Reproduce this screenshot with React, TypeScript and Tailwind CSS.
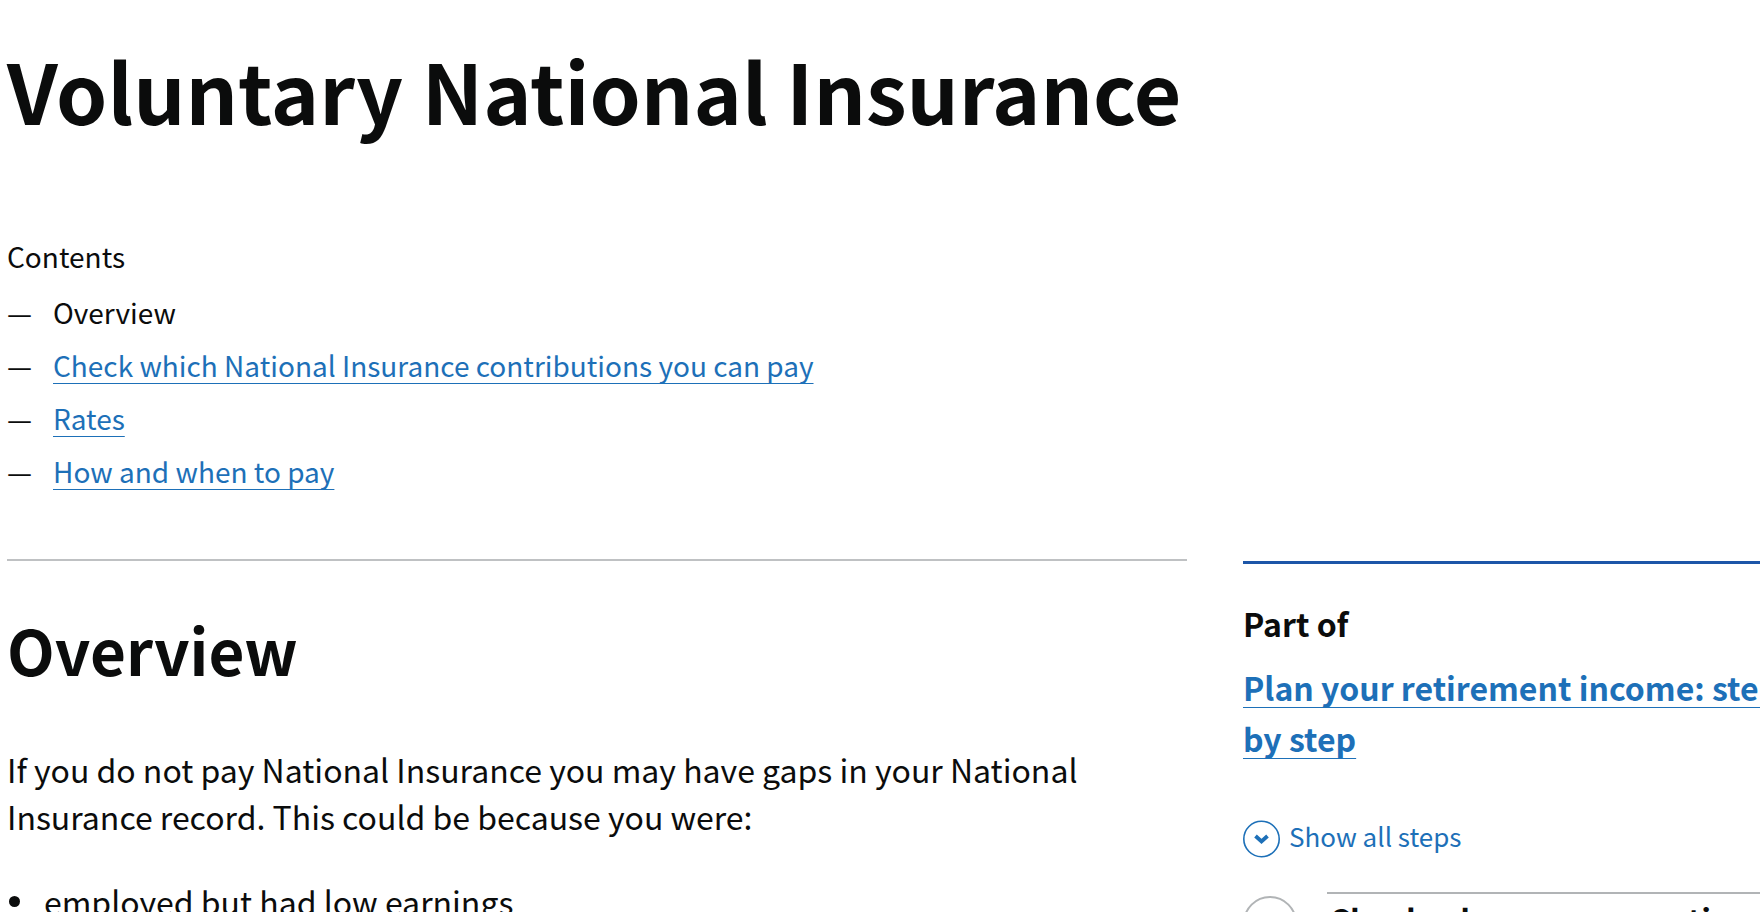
const contents = [
  { title: "Overview" },
  { title: "Check which National Insurance contributions you can pay", href: "#check" },
  { title: "Rates", href: "#rates" },
  { title: "How and when to pay", href: "#how-and-when-to-pay" },
];

const reasons = ["employed but had low earnings"];

function ContentsList() {
  return (
    <nav aria-label="Contents" className="text-[28px] leading-10">
      <h2>Contents</h2>
      <ol className="mt-4 flex flex-col gap-[13px]">
        {contents.map((item) => (
          <li key={item.title} className="flex">
            <span aria-hidden="true" className="w-[46px] shrink-0">
              —
            </span>
            {item.href ? (
              <a
                href={item.href}
                className="text-[#1d70b8] underline decoration-1 underline-offset-6 [text-decoration-skip-ink:none]"
              >
                {item.title}
              </a>
            ) : (
              <span>{item.title}</span>
            )}
          </li>
        ))}
      </ol>
    </nav>
  );
}

function StepNav() {
  return (
    <aside className="mt-0.5 border-t-3 border-[#1d56a8] pt-9">
      <h2 className="text-[32px] leading-[47px] font-bold">Part of</h2>
      <p className="mt-[15px] text-[32px] leading-[51px] font-bold">
        <a
          href="#step-by-step"
          className="text-[#1d70b8] underline decoration-1 underline-offset-6 [text-decoration-skip-ink:none]"
        >
          Plan your retirement income: step by step
        </a>
      </p>

      <button type="button" className="mt-14 flex gap-2 text-[26px] leading-8 text-[#1d70b8]">
        <svg viewBox="0 0 38 38" className="size-[38px]" fill="none" stroke="currentColor">
          <circle cx="18.5" cy="19" r="17.7" strokeWidth="1.6" />
          <path d="M12.5 16l6 5.5 6-5.5" strokeWidth="3.8" />
        </svg>
        Show all steps
      </button>

      <ol className="mt-[34px]">
        <li className="flex gap-[30px]">
          <span className="mt-1 flex size-[54px] shrink-0 items-center justify-center rounded-full border-2 border-[#b1b4b6] text-[26px] font-bold">
            1
          </span>
          <h3 className="flex-1 border-t-2 border-[#b1b4b6] pt-2 pl-0.5 text-[32px] leading-[34px] font-bold">
            Check when you can retire
          </h3>
        </li>
      </ol>
    </aside>
  );
}

export default function App() {
  return (
    <main className="h-screen overflow-hidden bg-white font-['Noto_Sans_CJK_SC','Noto_Sans',sans-serif] text-[#0b0c0c]">
      <div className="-mr-[45px] ml-[7px] pt-[45px]">
        <h1 className="text-[82px] leading-[90px] font-bold">Voluntary National Insurance</h1>

        <div className="mt-[101px]">
          <ContentsList />
        </div>

        <div className="mt-[68px] grid grid-cols-3 gap-14">
          <article className="col-span-2 border-t-2 border-[#bfc1c3] pt-[52px]">
            <h2 className="text-[62px] leading-[72px] font-bold">Overview</h2>
            <p className="mt-[61px] text-[32px] leading-[47px]">
              If you do not pay National Insurance you may have gaps in your National Insurance
              record. This could be because you were:
            </p>
            <ul className="mt-[38px] text-[32px] leading-[47px]">
              {reasons.map((reason) => (
                <li key={reason} className="flex items-center gap-6 pl-0.5">
                  <span className="size-[11px] rounded-full bg-[#0b0c0c]" />
                  {reason}
                </li>
              ))}
            </ul>
          </article>
          <StepNav />
        </div>
      </div>
    </main>
  );
}
